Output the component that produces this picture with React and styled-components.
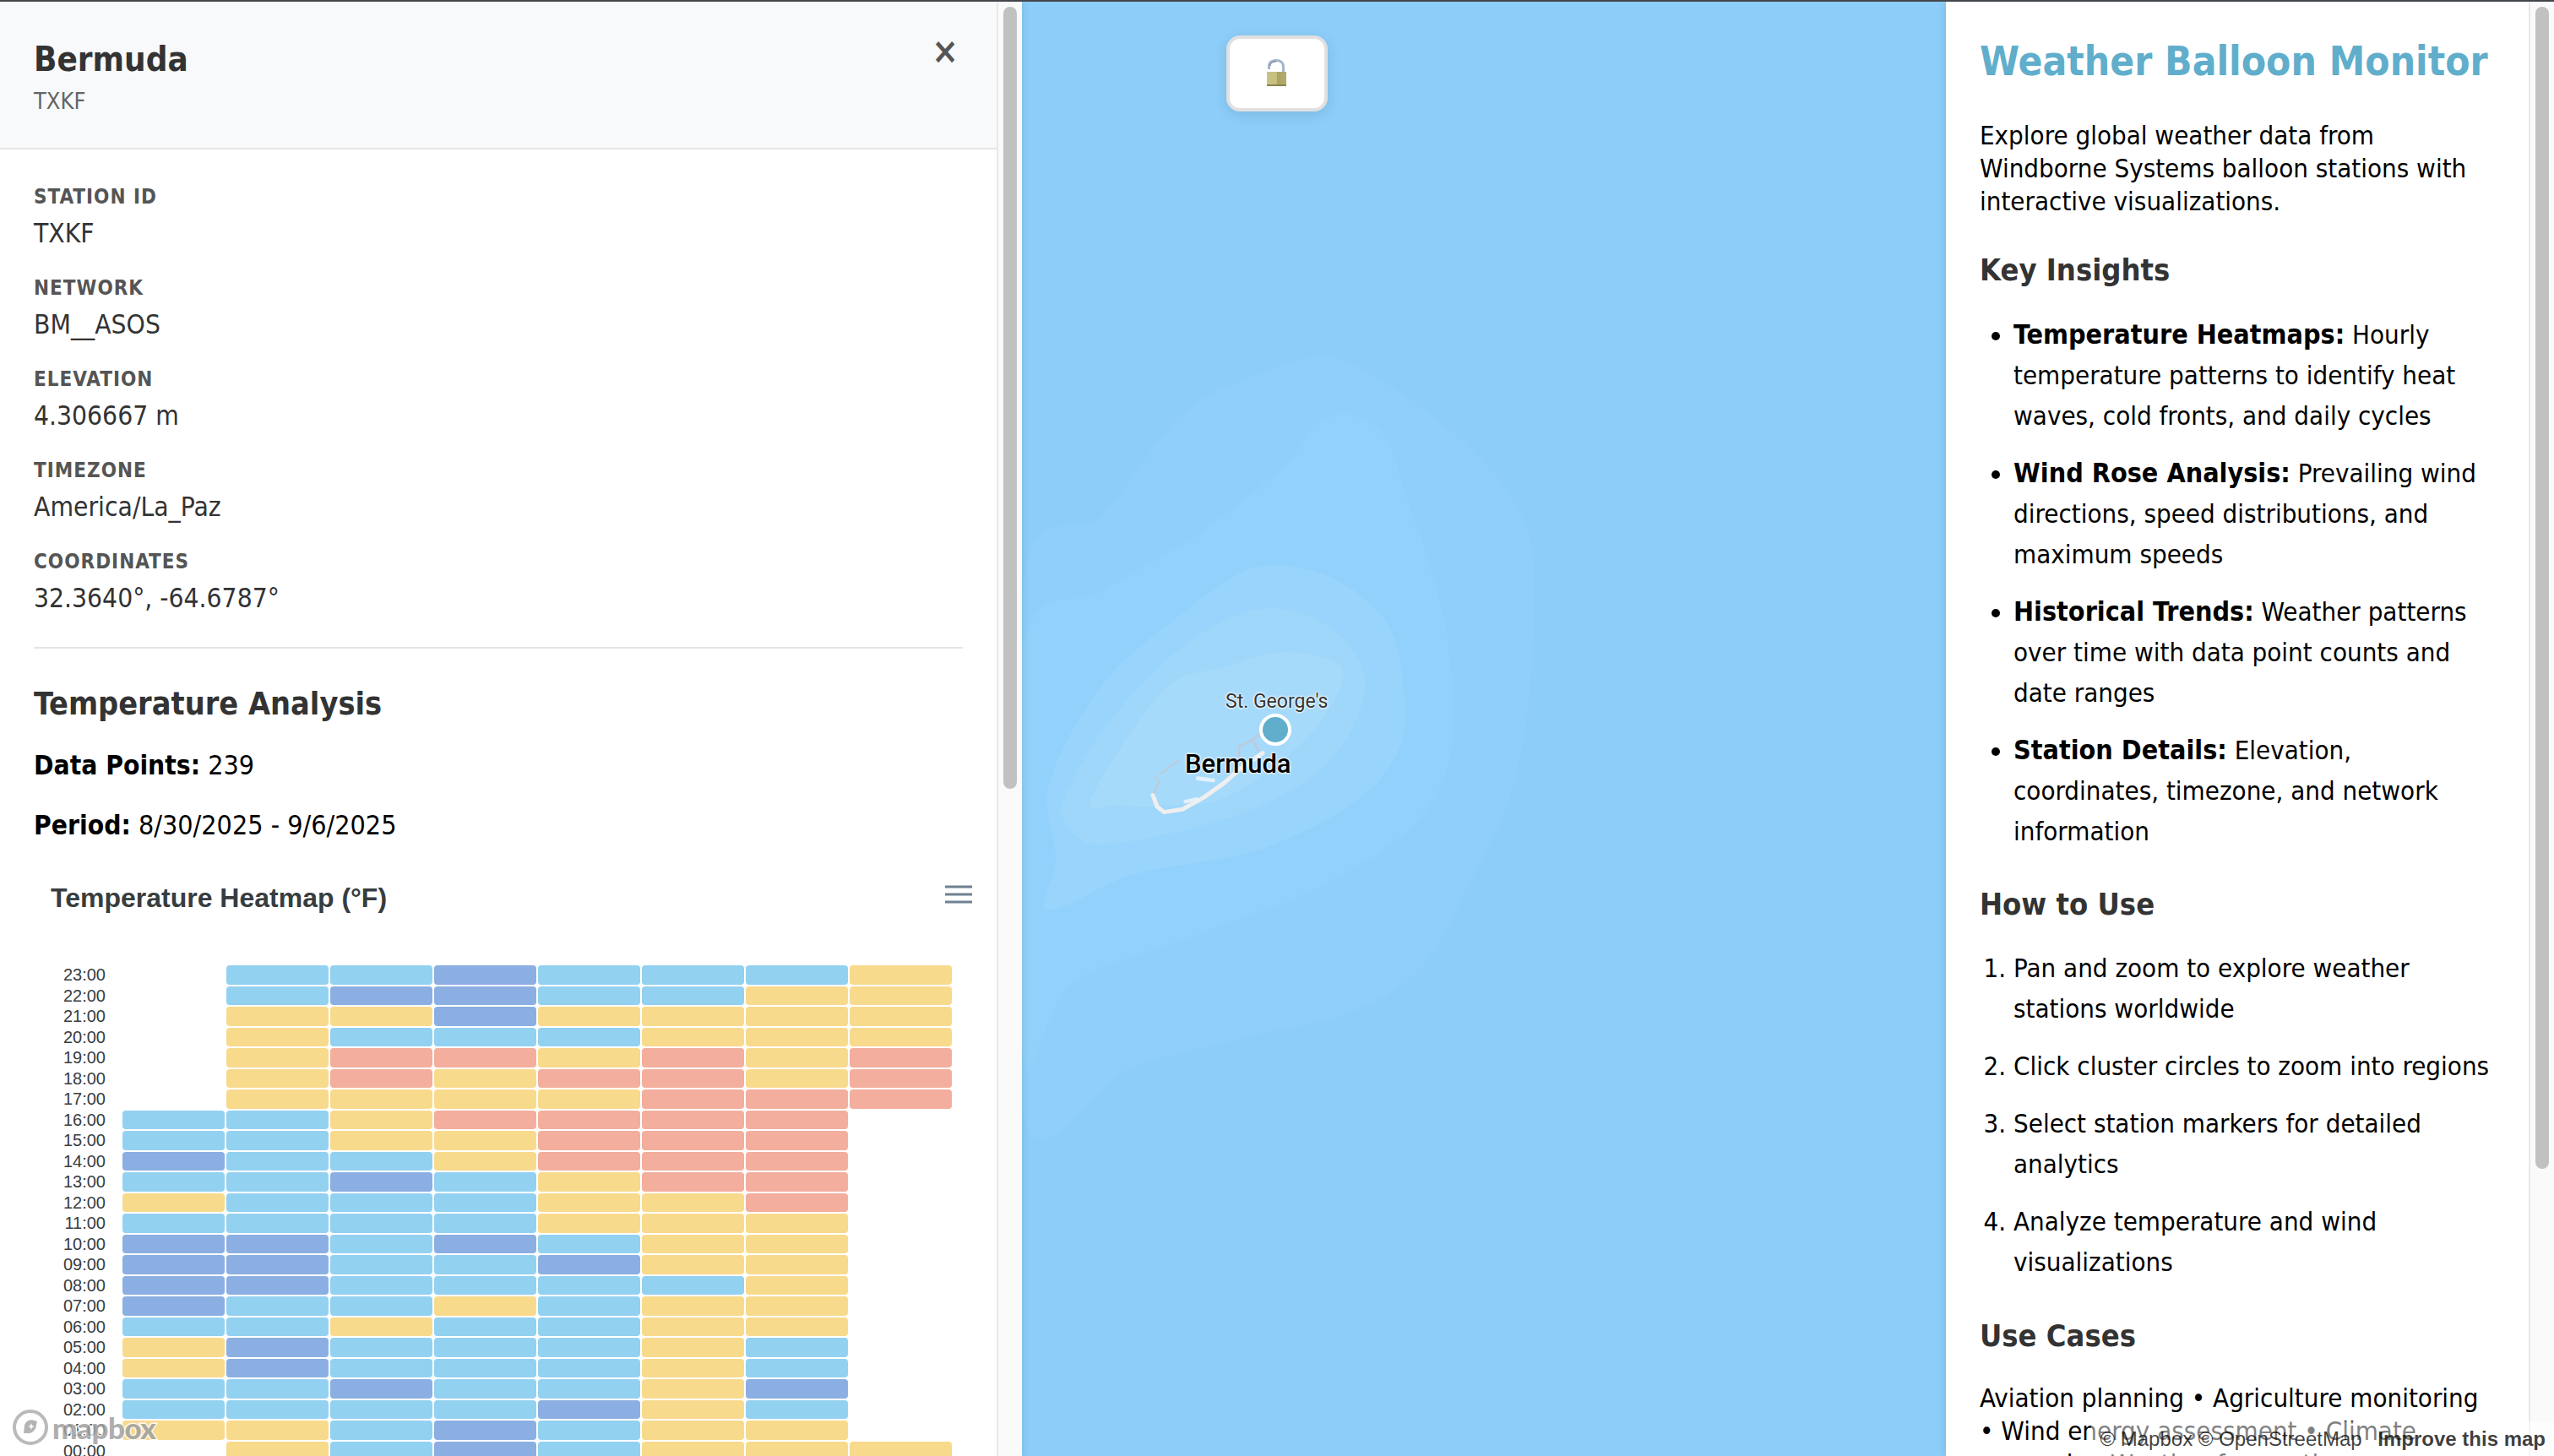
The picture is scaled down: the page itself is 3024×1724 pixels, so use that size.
import React from 'react'
import styled, { createGlobalStyle } from 'styled-components'

const BODY_FONT = '"DejaVu Sans Condensed", Tahoma, sans-serif'
const CHART_FONT = '"Liberation Sans", Helvetica, Arial, sans-serif'

const GlobalStyle = createGlobalStyle`
  html, body { margin: 0; padding: 0; height: 100%; overflow: hidden; background: #fff; }
  * { box-sizing: border-box; }
`

const Page = styled.div`
  position: relative;
  display: flex;
  width: 3024px;
  height: 1724px;
  overflow: hidden;
  border-top: 2px solid #43474b;
  font-family: ${BODY_FONT};
  color: #000;
`

const SidePanel = styled.aside`
  position: relative;
  z-index: 2;
  display: flex;
  flex: none;
  width: ${p => p.$width}px;
  height: 100%;
  background: #fff;
  box-shadow: 0 0 10px rgba(0, 0, 0, 0.12);
`
const PanelBody = styled.div`
  flex: 1;
  min-width: 0;
  overflow: hidden;
`
const ScrollRail = styled.div`
  flex: none;
  width: 30px;
  padding: 6px;
  background: #fafafa;
  border-left: 2px solid #e8e8e8;
`
const ScrollThumb = styled.div`
  width: 16px;
  height: ${p => p.$height}px;
  border-radius: 8px;
  background: #c1c1c1;
`

/* left panel */
const StationHeader = styled.header`
  position: relative;
  height: 175px;
  padding: 41px 40px 0;
  background: #f8f9fa;
  border-bottom: 2px solid #e5e5e5;
`
const StationName = styled.h2`
  margin: 0;
  font-size: 40px;
  line-height: 54px;
  font-weight: 700;
  color: #333;
`
const StationCode = styled.div`
  margin-top: 6px;
  font-size: 27px;
  line-height: 33px;
  color: #666;
`
const CloseButton = styled.button`
  position: absolute;
  top: 29px;
  right: 37px;
  width: 48px;
  height: 60px;
  padding: 0;
  border: 0;
  background: none;
  font-family: ${BODY_FONT};
  font-size: 42px;
  line-height: 60px;
  font-weight: 700;
  color: #555;
`
const StationBody = styled.div`
  padding: 42px 40px 0;
`
const Field = styled.div`
  margin-bottom: 31px;
`
const FieldLabel = styled.div`
  margin-bottom: 9px;
  font-size: 24px;
  line-height: 29px;
  font-weight: 700;
  letter-spacing: 1px;
  text-transform: uppercase;
  color: #555;
`
const FieldValue = styled.div`
  font-size: 31.5px;
  line-height: 39px;
  color: #333;
`
const Divider = styled.hr`
  height: 2px;
  margin: 38px 0 43px;
  border: 0;
  background: #e5e5e5;
`
const SectionTitle = styled.h3`
  margin: ${p => p.$margin};
  font-size: ${p => p.$size}px;
  line-height: 44px;
  font-weight: 700;
  color: #333;
`
const StatLine = styled.p`
  margin: 0 0 32px;
  font-size: 32px;
  line-height: 39px;
  b { font-weight: 700; font-size: 31.5px; }
`

/* heatmap */
const ChartHead = styled.div`
  display: flex;
  align-items: center;
  justify-content: space-between;
  height: 52px;
  margin-top: 40px;
  padding: 0 0 0 20px;
`
const ChartTitle = styled.div`
  font-family: ${CHART_FONT};
  font-size: 32px;
  font-weight: 700;
  color: #373d3f;
`
const MenuIcon = styled.svg`
  display: block;
  width: 36px;
  height: 24px;
  margin: 0 -13px 8px 0;
`
const HeatGrid = styled.div`
  display: grid;
  grid-template-columns: 103px repeat(8, 121px);
  grid-auto-rows: 22.5px;
  column-gap: 2px;
  row-gap: 2px;
  margin-top: 54px;
`
const HourLabel = styled.div`
  margin-right: 18px;
  font-family: ${CHART_FONT};
  font-size: 20px;
  line-height: 22.5px;
  text-align: right;
  color: #373d3f;
`
const CELL_COLORS = { B: '#93d1f1', D: '#8bafe2', Y: '#f8da8d', R: '#f3ae9d', _: 'transparent' }
const HeatCell = styled.div`
  border-radius: 4px;
  background: ${p => CELL_COLORS[p.$tone]};
`

/* map */
const MapArea = styled.main`
  position: relative;
  flex: 1;
  height: 100%;
  overflow: hidden;
  background: #8ccdf9;
`
const MapSvg = styled.svg`
  position: absolute;
  inset: 0;
  width: 100%;
  height: 100%;
`
const LockButton = styled.button`
  position: absolute;
  left: 242px;
  top: 40px;
  display: flex;
  align-items: center;
  justify-content: center;
  width: 120px;
  height: 90px;
  padding: 0;
  border: 4px solid #e0e0e0;
  border-radius: 16px;
  background: #fff;
  box-shadow: 0 4px 16px rgba(0, 0, 0, 0.1);
`
const PlaceLabel = styled.div`
  position: absolute;
  left: ${p => p.$x}px;
  top: ${p => p.$y}px;
  font-family: Roboto, sans-serif;
  font-size: ${p => p.$size}px;
  font-weight: ${p => p.$weight};
  line-height: 1;
  white-space: nowrap;
  color: ${p => p.$color};
  text-shadow: 0 0 3px #fff, 0 0 3px #fff, 0 0 2px #fff;
`
const StationMarker = styled.div`
  position: absolute;
  left: 281px;
  top: 843px;
  width: 38px;
  height: 38px;
  border: 4px solid #fff;
  border-radius: 50%;
  background: #60aecb;
`

/* right panel */
const InfoBody = styled.div`
  padding: 41px 40px 0;
`
const AppTitle = styled.h1`
  margin: 0 0 38px;
  font-size: 47.5px;
  line-height: 60px;
  font-weight: 700;
  color: #60aecb;
`
const Paragraph = styled.p`
  margin: 0;
  font-size: 31px;
  line-height: 39px;
`
const InfoList = styled.ul`
  margin: 0;
  padding: 0 0 0 40px;
  font-size: 31px;
  line-height: 48px;
`
const NumberedList = styled(InfoList).attrs({ as: 'ol' })``
const InfoItem = styled.li`
  margin-bottom: 20px;
  b { font-weight: 700; font-size: 32px; }
`

/* map credits lie over both side panels */
const MapLogo = styled.div`
  position: absolute;
  z-index: 5;
  left: 14px;
  bottom: 12px;
  display: flex;
  align-items: center;
  gap: 4px;
  opacity: 0.85;
`
const LogoWord = styled.span`
  font-family: Lato, sans-serif;
  font-size: 35px;
  font-weight: 900;
  line-height: 42px;
  letter-spacing: -0.5px;
  color: #a0a0a0;
  -webkit-text-stroke: 3px #fff;
  paint-order: stroke fill;
`
const Attribution = styled.div`
  position: absolute;
  z-index: 5;
  right: 0;
  bottom: 0;
  height: 41px;
  padding: 0 10px 0 10px;
  background: rgba(255, 255, 255, 0.5);
  font-family: ${CHART_FONT};
  font-size: 24px;
  line-height: 41px;
  white-space: nowrap;
  color: rgba(0, 0, 0, 0.75);
  b { margin-left: 12px; font-weight: 700; }
`

const HEAT_ROWS = [
  ['23:00', '_BBDBBBY'],
  ['22:00', '_BDDBBYY'],
  ['21:00', '_YYDYYYY'],
  ['20:00', '_YBBBYYY'],
  ['19:00', '_YRRYRYR'],
  ['18:00', '_YRYRRYR'],
  ['17:00', '_YYYYRRR'],
  ['16:00', 'BBYRRRR_'],
  ['15:00', 'BBYYRRR_'],
  ['14:00', 'DBBYRRR_'],
  ['13:00', 'BBDBYRR_'],
  ['12:00', 'YBBBYYR_'],
  ['11:00', 'BBBBYYY_'],
  ['10:00', 'DDBDBYY_'],
  ['09:00', 'DDBBDYY_'],
  ['08:00', 'DDBBBBY_'],
  ['07:00', 'DBBYBYY_'],
  ['06:00', 'BBYBBYY_'],
  ['05:00', 'YDBBBYB_'],
  ['04:00', 'YDBBBYB_'],
  ['03:00', 'BBDBBYD_'],
  ['02:00', 'BBBBDYB_'],
  ['01:00', 'YYBDBYY_'],
  ['00:00', '_YBDBYYY'],
]

const FIELDS = [
  ['Station ID', 'TXKF'],
  ['Network', 'BM__ASOS'],
  ['Elevation', '4.306667 m'],
  ['Timezone', 'America/La_Paz'],
  ['Coordinates', '32.3640°, -64.6787°'],
]

const INSIGHTS = [
  ['Temperature Heatmaps:', 'Hourly temperature patterns to identify heat waves, cold fronts, and daily cycles'],
  ['Wind Rose Analysis:', 'Prevailing wind directions, speed distributions, and maximum speeds'],
  ['Historical Trends:', 'Weather patterns over time with data point counts and date ranges'],
  ['Station Details:', 'Elevation, coordinates, timezone, and network information'],
]

const STEPS = [
  'Pan and zoom to explore weather stations worldwide',
  'Click cluster circles to zoom into regions',
  'Select station markers for detailed analytics',
  'Analyze temperature and wind visualizations',
]

// depth contours around the island, light to lighter
const CONTOURS = [
  ['#8fcffa', [[14, 440], [150, 340], [280, 210], [400, 160], [520, 135], [620, 170], [740, 240], [830, 320], [865, 400], [860, 560], [830, 700], [760, 820], [680, 930], [560, 990], [400, 1020], [200, 1060], [14, 1120]]],
  ['#92d1fb', [[14, 520], [150, 440], [300, 370], [400, 310], [460, 270], [500, 225], [560, 210], [620, 240], [650, 310], [690, 400], [725, 520], [725, 660], [660, 750], [500, 830], [300, 890], [100, 950], [14, 1040]]],
  ['#98d4fb', [[60, 690], [150, 560], [280, 470], [400, 410], [520, 420], [620, 480], [650, 570], [640, 650], [560, 720], [400, 780], [200, 810], [90, 850], [50, 850], [70, 790]]],
  ['#9fd7fb', [[85, 710], [150, 620], [270, 520], [400, 465], [510, 480], [580, 540], [570, 610], [500, 680], [380, 730], [240, 760], [130, 770], [85, 740]]],
  ['#a6dafb', [[130, 710], [250, 570], [350, 540], [450, 520], [545, 540], [520, 600], [450, 660], [350, 710], [260, 720], [170, 720]]],
]

// closed catmull-rom through the points
const smoothPath = pts => {
  const n = pts.length
  let d = `M${pts[0][0]} ${pts[0][1]}`
  for (let i = 0; i < n; i++) {
    const p0 = pts[(i - 1 + n) % n]
    const p1 = pts[i]
    const p2 = pts[(i + 1) % n]
    const p3 = pts[(i + 2) % n]
    const c1 = [p1[0] + (p2[0] - p0[0]) / 6, p1[1] + (p2[1] - p0[1]) / 6]
    const c2 = [p2[0] - (p3[0] - p1[0]) / 6, p2[1] - (p3[1] - p1[1]) / 6]
    d += `C${c1[0]} ${c1[1]} ${c2[0]} ${c2[1]} ${p2[0]} ${p2[1]}`
  }
  return d + 'Z'
}

const MapDrawing = () => (
  <MapSvg viewBox="1210 2 1094 1722" preserveAspectRatio="none">
    <g transform="translate(1200 300) scale(0.7117 0.908)">
      {CONTOURS.map(([fill, pts]) => <path key={fill} d={smoothPath(pts)} fill={fill} />)}
    </g>
    <g transform="translate(1250 700) scale(0.3333)" fill="none" strokeLinecap="round" strokeLinejoin="round">
      <path d="M437 600L372 650M352 660L368 676L350 715L345 745" stroke="#bccbdb" strokeWidth="7" />
      <path d="M652 585L652 552L700 527L722 570M700 527L735 500" stroke="#bccbdb" strokeWidth="8" />
      <path d="M345 725L360 765L385 785L450 775L530 730L600 680L650 635L735 575" stroke="#f0eff0" strokeWidth="15" />
      <path d="M505 665L560 672" stroke="#e4f1fb" strokeWidth="14" />
      <path d="M460 748L500 738" stroke="#e4f1fb" strokeWidth="12" />
    </g>
  </MapSvg>
)

const OpenLock = () => (
  <svg width="26" height="34" viewBox="0 0 26 34">
    <defs>
      <linearGradient id="brass" x1="0" x2="1" y1="0" y2="0">
        <stop offset="0" stopColor="#c9c284" />
        <stop offset="0.5" stopColor="#c6be7c" />
        <stop offset="0.52" stopColor="#aaa263" />
        <stop offset="1" stopColor="#b4ac6c" />
      </linearGradient>
    </defs>
    <path d="M3.5 12V8C3.5 3.5 7.5 1.5 12 1.5C17 1.5 20.5 4 20.5 9V16" fill="none" stroke="#a3b6cc" strokeWidth="3" />
    <path d="M5 8C5 4.5 8 3 12 3" fill="none" stroke="#5f6670" strokeWidth="1" />
    <rect x="1" y="15" width="23" height="17" fill="url(#brass)" />
    <rect x="1" y="30" width="23" height="2" fill="#8a8350" />
  </svg>
)

const MapboxMark = () => (
  <svg width="44" height="44" viewBox="0 0 44 44">
    <circle cx="22" cy="22" r="19" fill="#fff" fillOpacity="0.7" stroke="#aeaeae" strokeWidth="4" />
    <path d="M14 29L15 20C16 15 22 12 27 14L30 15L29 19C29 25 24 30 18 29Z" fill="#a8a8a8" />
    <path d="M23 17L24 20L27 21L24 22L23 25L22 22L19 21L22 20Z" fill="#fff" />
  </svg>
)

export default function App() {
  return (
    <Page>
      <GlobalStyle />

      <SidePanel $width={1210}>
        <PanelBody>
          <StationHeader>
            <StationName>Bermuda</StationName>
            <StationCode>TXKF</StationCode>
            <CloseButton>×</CloseButton>
          </StationHeader>
          <StationBody>
            {FIELDS.map(([label, value]) => (
              <Field key={label}>
                <FieldLabel>{label}</FieldLabel>
                <FieldValue>{value}</FieldValue>
              </Field>
            ))}
            <Divider />
            <SectionTitle $size={37.5} $margin="0 0 32px">Temperature Analysis</SectionTitle>
            <StatLine><b>Data Points:</b> 239</StatLine>
            <StatLine><b>Period:</b> 8/30/2025 - 9/6/2025</StatLine>
            <ChartHead>
              <ChartTitle>Temperature Heatmap (°F)</ChartTitle>
              <MenuIcon viewBox="0 0 36 24">
                <path d="M2 3H34M2 12H34M2 21H34" stroke="#6e8192" strokeWidth="3" />
              </MenuIcon>
            </ChartHead>
            <HeatGrid>
              {HEAT_ROWS.map(([hour, tones]) => (
                <React.Fragment key={hour}>
                  <HourLabel>{hour}</HourLabel>
                  {tones.split('').map((tone, i) => <HeatCell key={i} $tone={tone} />)}
                </React.Fragment>
              ))}
            </HeatGrid>
          </StationBody>
        </PanelBody>
        <ScrollRail><ScrollThumb $height={926} /></ScrollRail>
      </SidePanel>

      <MapArea>
        <MapDrawing />
        <LockButton aria-label="Unlock map"><OpenLock /></LockButton>
        <PlaceLabel $x={241} $y={817} $size={23} $weight={400} $color="#333">St. George's</PlaceLabel>
        <PlaceLabel $x={193} $y={887} $size={31} $weight={500} $color="#000">Bermuda</PlaceLabel>
        <StationMarker />
      </MapArea>

      <SidePanel $width={720}>
        <PanelBody>
          <InfoBody>
            <AppTitle>Weather Balloon Monitor</AppTitle>
            <Paragraph>Explore global weather data from Windborne Systems balloon stations with interactive visualizations.</Paragraph>
            <SectionTitle $size={36} $margin="40px 0 30px">Key Insights</SectionTitle>
            <InfoList>
              {INSIGHTS.map(([lead, rest]) => (
                <InfoItem key={lead}><b>{lead}</b> {rest}</InfoItem>
              ))}
            </InfoList>
            <SectionTitle $size={36} $margin="41px 0 29px">How to Use</SectionTitle>
            <NumberedList>
              {STEPS.map(step => <InfoItem key={step}>{step}</InfoItem>)}
            </NumberedList>
            <SectionTitle $size={36} $margin="42px 0 32px">Use Cases</SectionTitle>
            <Paragraph>Aviation planning • Agriculture monitoring • Wind energy assessment • Climate research • Weather forecasting</Paragraph>
          </InfoBody>
        </PanelBody>
        <ScrollRail><ScrollThumb $height={1376} /></ScrollRail>
      </SidePanel>

      <MapLogo>
        <MapboxMark />
        <LogoWord>mapbox</LogoWord>
      </MapLogo>
      <Attribution>© Mapbox © OpenStreetMap <b>Improve this map</b></Attribution>
    </Page>
  )
}
